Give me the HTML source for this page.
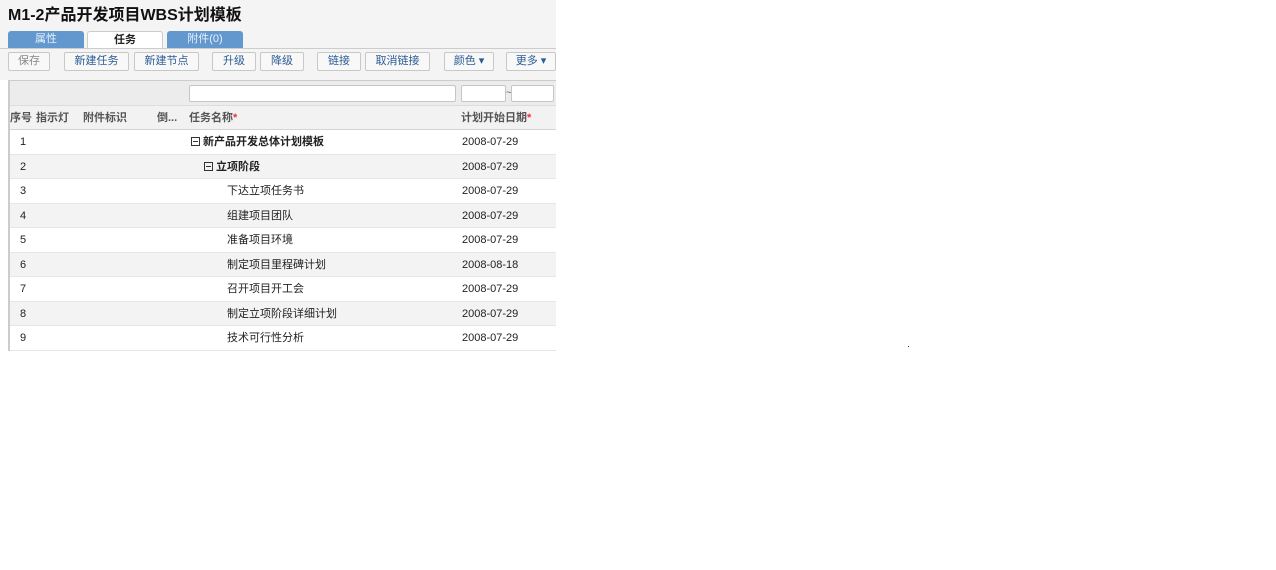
<!DOCTYPE html>
<html><head><meta charset="utf-8"><style>
*{margin:0;padding:0;box-sizing:border-box}
body{width:1276px;height:570px;background:#fff;font-family:"Liberation Sans","Noto Sans CJK SC",sans-serif;position:relative;overflow:hidden;font-size:11px;color:#222}
.top{position:absolute;left:0;top:0;width:556px;height:80px;background:#f4f4f4}
.title{position:absolute;left:8px;top:6px;font-size:16px;line-height:20px;font-weight:bold;color:#111}
.tab{position:absolute;top:31px;height:17px;width:76px;text-align:center;line-height:17px;font-size:11px;border-radius:3px 3px 0 0;overflow:hidden}
.tb{background:#6398cf;color:#e8f0fa}
.tw{background:#fff;border:1px solid #ccc;border-bottom:none;font-weight:bold;color:#222;height:18px;line-height:16px}
.tline{position:absolute;left:0;top:48px;width:556px;height:1px;background:#ccc}
.btn{position:absolute;top:52px;height:19px;border:1px solid #c8c8c8;background:#f8f8f8;border-radius:2px;text-align:center;line-height:17px;color:#2c5c94;font-size:11px;overflow:hidden}
.btn.d{color:#888}
.grid{position:absolute;left:8px;top:80px;width:548px;height:271px;border-left:2px solid #ccc;border-top:1px solid #ccc}
.fr{position:absolute;left:0;top:0;width:546px;height:24px;background:#ececec}
.in{position:absolute;top:4px;height:17px;background:#fff;border:1px solid #c6c6c6;border-radius:2px}
.hr{position:absolute;left:0;top:24px;width:546px;height:25px;background:#f2f2f2;border-top:1px solid #ddd;border-bottom:1px solid #d4d4d4;font-weight:bold;color:#555}
.hr span{position:absolute;top:0;line-height:24px}
.r{position:absolute;left:0;width:546px;height:24.5px;border-bottom:1px solid #e6e6e6}
.r span{position:absolute;top:0;line-height:25px;height:24px}
.r .n{left:10px}
.r .d{left:452px}
.r .t{left:217px}
.box{display:inline-block;width:9px;height:9px;border:1px solid #333;position:relative;vertical-align:-1px;margin-right:3px}
.box:after{content:"";position:absolute;left:1px;top:3px;width:5px;height:1px;background:#333}
.red{color:#e33}
</style></head><body>
<div class="top"></div>
<div class="title">M1-2产品开发项目WBS计划模板</div>
<div class="tab tb" style="left:8px">属性</div>
<div class="tab tw" style="left:87px">任务</div>
<div class="tab tb" style="left:167px">附件(0)</div>
<div class="tline"></div>
<div class="btn d" style="left:8px;width:42px">保存</div>
<div class="btn" style="left:64px;width:65px">新建任务</div>
<div class="btn" style="left:134px;width:65px">新建节点</div>
<div class="btn" style="left:212px;width:44px">升级</div>
<div class="btn" style="left:260px;width:44px">降级</div>
<div class="btn" style="left:317px;width:44px">链接</div>
<div class="btn" style="left:365px;width:65px">取消链接</div>
<div class="btn" style="left:444px;width:50px">颜色 ▾</div>
<div class="btn" style="left:506px;width:50px">更多 ▾</div>
<div class="grid">
<div class="fr">
<div class="in" style="left:179px;width:267px"></div>
<div class="in" style="left:451px;width:45px"></div>
<span style="position:absolute;left:496px;top:6px;color:#666">~</span>
<div class="in" style="left:501px;width:43px"></div>
</div>
<div class="hr">
<span style="left:0">序号</span><span style="left:26px">指示灯</span><span style="left:73px">附件标识</span><span style="left:147px">倒...</span><span style="left:179px">任务名称<b class="red">*</b></span><span style="left:451px">计划开始日期<b class="red">*</b></span>
</div>
<div class="r" style="top:49px;background:#fff"><span class="n">1</span><span style="left:181px;font-weight:bold"><i class="box"></i>新产品开发总体计划模板</span><span class="d">2008-07-29</span></div>
<div class="r" style="top:73.5px;background:#f3f3f3"><span class="n">2</span><span style="left:194px;font-weight:bold"><i class="box"></i>立项阶段</span><span class="d">2008-07-29</span></div>
<div class="r" style="top:98px;background:#fff"><span class="n">3</span><span class="t">下达立项任务书</span><span class="d">2008-07-29</span></div>
<div class="r" style="top:122.5px;background:#f3f3f3"><span class="n">4</span><span class="t">组建项目团队</span><span class="d">2008-07-29</span></div>
<div class="r" style="top:147px;background:#fff"><span class="n">5</span><span class="t">准备项目环境</span><span class="d">2008-07-29</span></div>
<div class="r" style="top:171.5px;background:#f3f3f3"><span class="n">6</span><span class="t">制定项目里程碑计划</span><span class="d">2008-08-18</span></div>
<div class="r" style="top:196px;background:#fff"><span class="n">7</span><span class="t">召开项目开工会</span><span class="d">2008-07-29</span></div>
<div class="r" style="top:220.5px;background:#f3f3f3"><span class="n">8</span><span class="t">制定立项阶段详细计划</span><span class="d">2008-07-29</span></div>
<div class="r" style="top:245px;background:#fff"><span class="n">9</span><span class="t">技术可行性分析</span><span class="d">2008-07-29</span></div>
</div>
<div style="position:absolute;left:908px;top:346px;width:1px;height:1px;background:#333"></div>
</body></html>
